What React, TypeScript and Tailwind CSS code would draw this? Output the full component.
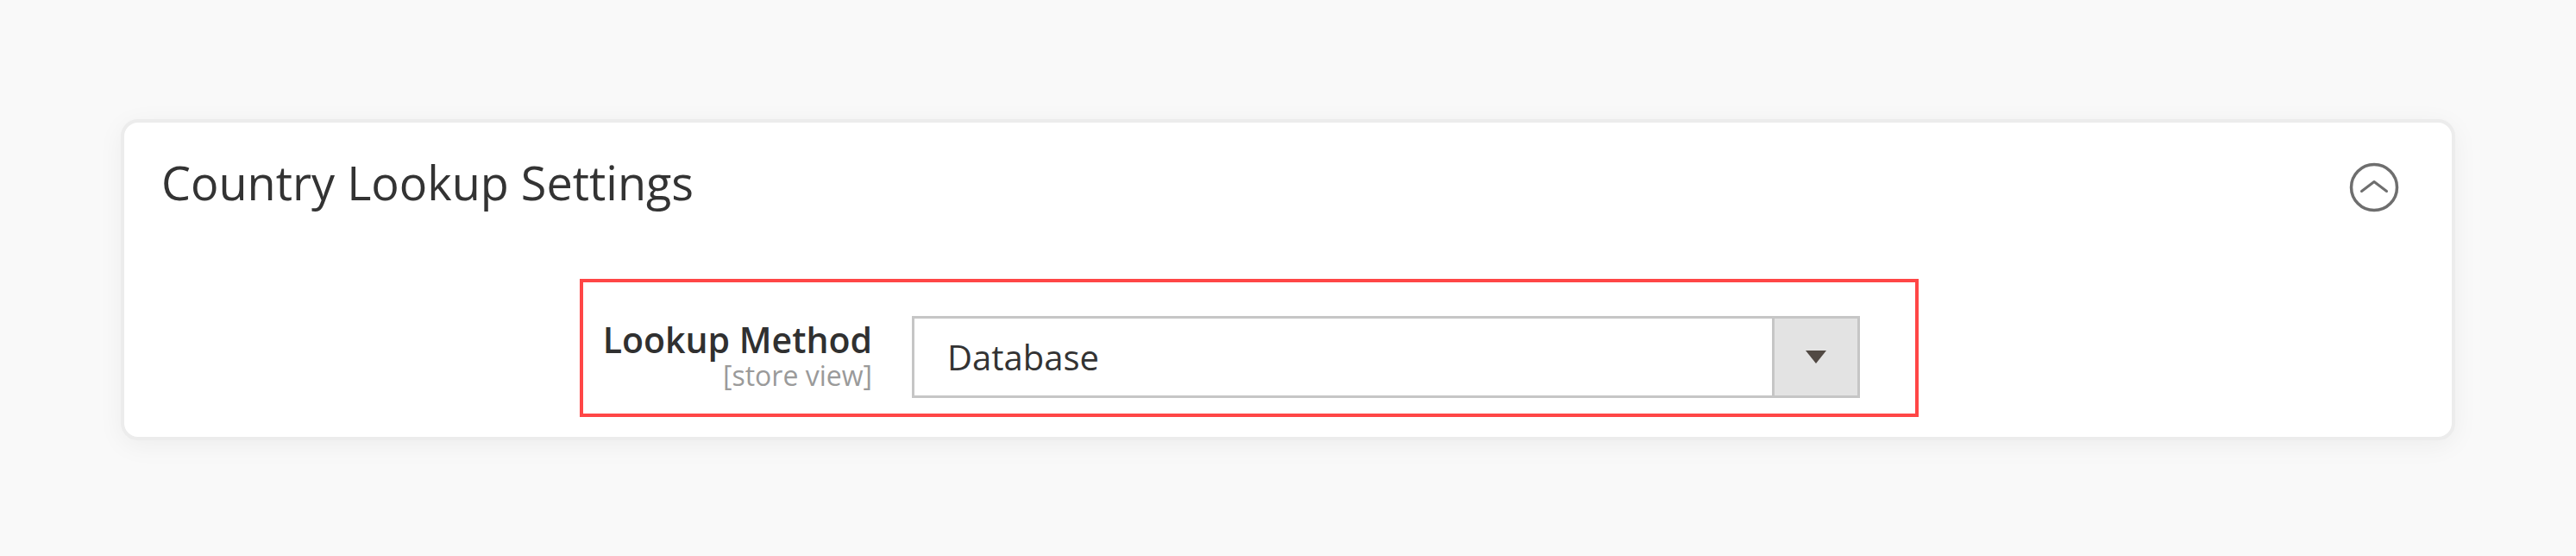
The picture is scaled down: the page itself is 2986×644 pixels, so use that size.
import { useState } from 'react';

const options = ['Database', 'Web Service'];

function CollapseIcon() {
  return (
    <svg width="58" height="58" viewBox="0 0 58 58" fill="none">
      <circle cx="29" cy="29" r="26.5" stroke="#6e6e6e" strokeWidth="3.5" />
      <path d="M14.5 33.5 L29 22.5 L43.5 33.5" stroke="#6e6e6e" strokeWidth="3" strokeLinecap="round" strokeLinejoin="round" />
    </svg>
  );
}

export default function App() {
  const [method] = useState(options[0]);

  return (
    <div className="min-h-[644px] w-full bg-[#f9f9f9] px-[140px] pt-[138px] font-['Open_Sans',sans-serif]">
      {/* Section card */}
      <div className="rounded-[20px] border-4 border-[#ececec] bg-white pb-[23px] shadow-[0_6px_30px_rgba(0,0,0,0.05)]">
        {/* Header */}
        <div className="flex h-[181px] items-start justify-between pl-[43px] pr-[61px] pt-[42px]">
          <h2 className="text-[54px] leading-[54px] font-normal text-[#333333]">Country Lookup Settings</h2>
          <button className="mt-[4px]">
            <CollapseIcon />
          </button>
        </div>

        {/* Highlighted field row */}
        <div className="ml-[528px] flex h-[160px] w-[1552px] items-start border-4 border-[#ff4646]">
          <div className="flex w-[335px] flex-col items-end pt-[42px] text-right">
            <span className="text-[41px] leading-[48px] font-semibold text-[#303030]">Lookup Method</span>
            <span className="text-[32px] leading-[36px] text-[#9a9a9a]">[store view]</span>
          </div>
          <div className="ml-[46px] mt-[39px] flex h-[95px] w-[1099px] border-[3px] border-[#c6c6c6] bg-white">
            <div className="flex flex-1 items-center pl-[38px] text-[40px] text-[#333333]">{method}</div>
            <div className="flex w-[99px] items-center justify-center border-l-[3px] border-[#c6c6c6] bg-[#e3e3e3]">
              <svg width="24" height="15" viewBox="0 0 24 15">
                <path d="M0 0 H24 L12 15 Z" fill="#514943" />
              </svg>
            </div>
          </div>
        </div>
      </div>
    </div>
  );
}
